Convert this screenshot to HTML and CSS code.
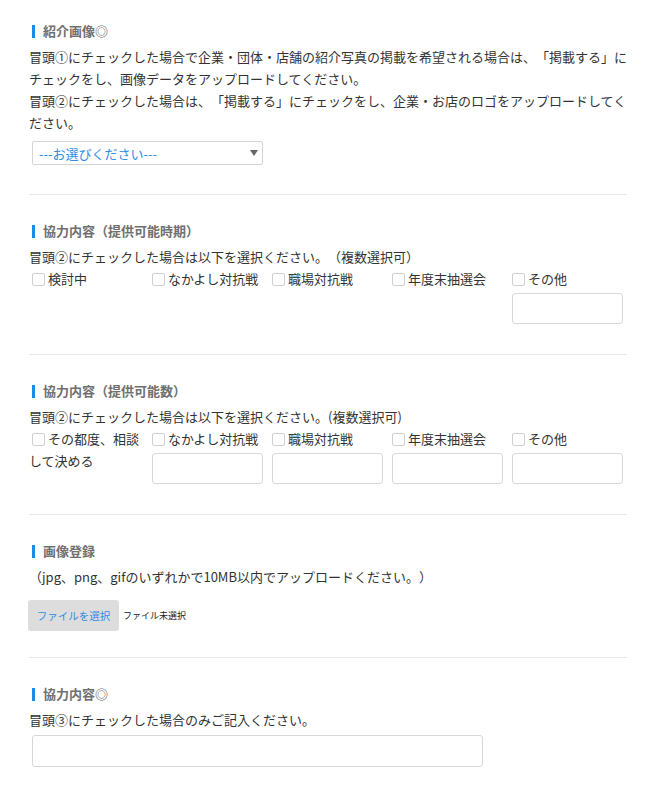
FILE: index.html
```html
<!DOCTYPE html>
<html lang="ja">
<head>
    <meta charset="UTF-8">
    <meta name="viewport" content="width=device-width, initial-scale=1.0">
    <title>応募フォーム</title>
    <link rel="stylesheet" href="styles.css">
</head>
<body>

<div class="form-page">

    <div class="section">
        <h2 class="field-title">紹介画像◎</h2>
        <p class="field-note">冒頭①にチェックした場合で企業・団体・店舗の紹介写真の掲載を希望される場合は、「掲載する」にチェックをし、画像データをアップロードしてください。</p>
        <p class="field-note">冒頭②にチェックした場合は、「掲載する」にチェックをし、企業・お店のロゴをアップロードしてください。</p>
        <div class="select-wrap">
            <select class="select-box">
                <option>---お選びください---</option>
                <option>掲載する</option>
                <option>掲載しない</option>
            </select>
        </div>
    </div>

    <div class="section">
        <h2 class="field-title">協力内容（提供可能時期）</h2>
        <p class="field-note">冒頭②にチェックした場合は以下を選択ください。（複数選択可）</p>
        <div class="check-row">
            <div class="check-col">
                <label class="check-label"><input type="checkbox" class="check-box">検討中</label>
            </div>
            <div class="check-col">
                <label class="check-label"><input type="checkbox" class="check-box">なかよし対抗戦</label>
            </div>
            <div class="check-col">
                <label class="check-label"><input type="checkbox" class="check-box">職場対抗戦</label>
            </div>
            <div class="check-col">
                <label class="check-label"><input type="checkbox" class="check-box">年度末抽選会</label>
            </div>
            <div class="check-col">
                <label class="check-label"><input type="checkbox" class="check-box">その他</label>
                <input type="text" class="text-box small">
            </div>
        </div>
    </div>

    <div class="section">
        <h2 class="field-title">協力内容（提供可能数）</h2>
        <p class="field-note">冒頭②にチェックした場合は以下を選択ください。(複数選択可)</p>
        <div class="check-row">
            <div class="check-col">
                <label class="check-label"><input type="checkbox" class="check-box">その都度、相談して決める</label>
            </div>
            <div class="check-col">
                <label class="check-label"><input type="checkbox" class="check-box">なかよし対抗戦</label>
                <input type="text" class="text-box small">
            </div>
            <div class="check-col">
                <label class="check-label"><input type="checkbox" class="check-box">職場対抗戦</label>
                <input type="text" class="text-box small">
            </div>
            <div class="check-col">
                <label class="check-label"><input type="checkbox" class="check-box">年度末抽選会</label>
                <input type="text" class="text-box small">
            </div>
            <div class="check-col">
                <label class="check-label"><input type="checkbox" class="check-box">その他</label>
                <input type="text" class="text-box small">
            </div>
        </div>
    </div>

    <div class="section upload">
        <h2 class="field-title">画像登録</h2>
        <p class="field-note">（jpg、png、gifのいずれかで10MB以内でアップロードください。）</p>
        <div class="file-row">
            <button type="button" class="file-button">ファイルを選択</button>
            <span class="file-name">ファイル未選択</span>
        </div>
    </div>

    <div class="section">
        <h2 class="field-title">協力内容◎</h2>
        <p class="field-note">冒頭③にチェックした場合のみご記入ください。</p>
        <input type="text" class="text-box wide">
    </div>

</div>

</body>
</html>
```

FILE: styles.css
```css
body {
    margin: 0;
    font-family: "Noto Sans CJK JP", "Noto Sans", sans-serif;
    font-size: 13px;
    color: #333;
    background-color: #fff;
    text-spacing-trim: space-all;
}

.form-page {
    width: 598px;
    margin-left: 29px;
    padding-top: 21px;
}

.section {
    padding-bottom: 30px;
}

.section:first-child {
    padding-bottom: 29px;
}

.section + .section {
    border-top: 1px solid #e6e6e6;
    padding-top: 26px;
}

.section.upload {
    padding-bottom: 26px;
}

.field-title {
    display: flex;
    align-items: center;
    margin: 0 0 5px;
    font-size: 13px;
    font-weight: bold;
    line-height: 20px;
    color: #707070;
}

.field-title::before {
    content: "";
    width: 3px;
    height: 13px;
    margin: 0 8px 0 3px;
    background-color: #1e8ae0;
}

.field-note {
    margin: 0;
    line-height: 22px;
}

.select-wrap {
    position: relative;
    width: 231px;
    margin: 7px 0 0 3px;
}

.select-wrap::after {
    content: "";
    position: absolute;
    right: 5px;
    top: 9px;
    border-left: 4px solid transparent;
    border-right: 4px solid transparent;
    border-top: 6px solid #666;
}

.select-box {
    appearance: none;
    width: 100%;
    height: 24px;
    padding: 0 6px;
    font-family: inherit;
    font-size: 13px;
    color: #2f8ce6;
    background-color: #fff;
    border: 1px solid #d4d4d4;
    border-radius: 2px;
}

.check-row {
    display: grid;
    grid-template-columns: repeat(5, 120px);
}

.check-label {
    display: block;
    line-height: 22px;
}

.check-box {
    appearance: none;
    width: 13px;
    height: 13px;
    margin: 0 3px 0 3px;
    vertical-align: -2px;
    background-color: #fff;
    border: 1px solid #d0d0d0;
    border-radius: 2px;
}

.text-box {
    display: block;
    box-sizing: border-box;
    margin: 3px 0 0 3px;
    border: 1px solid #d8d8d8;
    border-radius: 3px;
    background-color: #fff;
    font-family: inherit;
}

.text-box.small {
    width: 111px;
    height: 31px;
}

.text-box.wide {
    width: 451px;
    height: 32px;
    margin-top: 4px;
}

.file-row {
    display: flex;
    align-items: center;
    margin-top: 12px;
}

.file-button {
    width: 91px;
    height: 31px;
    margin-left: -1px;
    padding: 0;
    font-family: inherit;
    font-size: 10.5px;
    color: #2f8ce6;
    background-color: #dddddd;
    border: none;
    border-radius: 3px;
}

.file-name {
    margin-left: 4px;
    font-size: 9px;
    color: #222;
}
```
